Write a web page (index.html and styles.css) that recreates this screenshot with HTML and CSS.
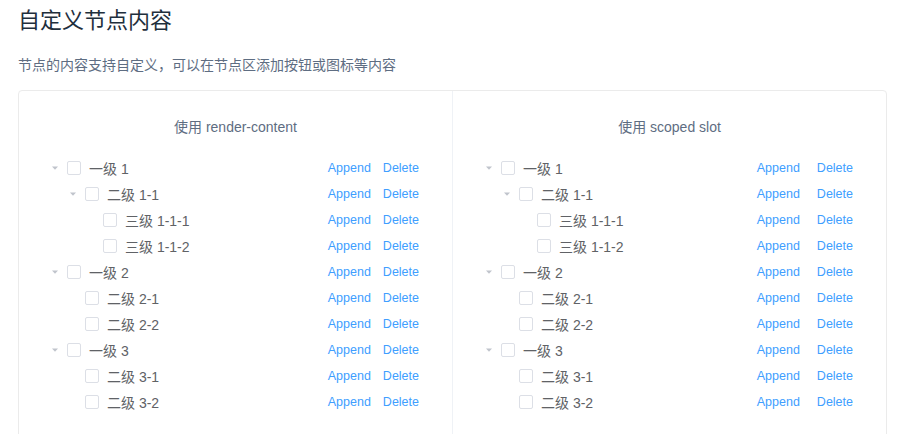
FILE: index.html
```html
<!DOCTYPE html>
<html lang="zh">
<head>
<meta charset="utf-8">
<link rel="stylesheet" href="styles.css">
</head>
<body>
<div class="page">
  <h3 class="title">自定义节点内容</h3>
  <p class="desc">节点的内容支持自定义，可以在节点区添加按钮或图标等内容</p>
  <div class="demo">
    <div class="block">
      <p class="demonstration">使用 render-content</p>
      <div class="tree">
        <div class="node l1"><span class="caret"><svg width="12" height="12" viewBox="0 0 12 12"><polygon points="3,4.5 9,4.5 6,7.8" fill="#c0c4cc"/></svg></span><span class="cb"></span><span class="label">一级 1</span><span class="ops"><span class="btn">Append</span><span class="btn">Delete</span></span></div>
        <div class="node l2"><span class="caret"><svg width="12" height="12" viewBox="0 0 12 12"><polygon points="3,4.5 9,4.5 6,7.8" fill="#c0c4cc"/></svg></span><span class="cb"></span><span class="label">二级 1-1</span><span class="ops"><span class="btn">Append</span><span class="btn">Delete</span></span></div>
        <div class="node l3"><span class="caret leaf"></span><span class="cb"></span><span class="label">三级 1-1-1</span><span class="ops"><span class="btn">Append</span><span class="btn">Delete</span></span></div>
        <div class="node l3"><span class="caret leaf"></span><span class="cb"></span><span class="label">三级 1-1-2</span><span class="ops"><span class="btn">Append</span><span class="btn">Delete</span></span></div>
        <div class="node l1"><span class="caret"><svg width="12" height="12" viewBox="0 0 12 12"><polygon points="3,4.5 9,4.5 6,7.8" fill="#c0c4cc"/></svg></span><span class="cb"></span><span class="label">一级 2</span><span class="ops"><span class="btn">Append</span><span class="btn">Delete</span></span></div>
        <div class="node l2"><span class="caret leaf"></span><span class="cb"></span><span class="label">二级 2-1</span><span class="ops"><span class="btn">Append</span><span class="btn">Delete</span></span></div>
        <div class="node l2"><span class="caret leaf"></span><span class="cb"></span><span class="label">二级 2-2</span><span class="ops"><span class="btn">Append</span><span class="btn">Delete</span></span></div>
        <div class="node l1"><span class="caret"><svg width="12" height="12" viewBox="0 0 12 12"><polygon points="3,4.5 9,4.5 6,7.8" fill="#c0c4cc"/></svg></span><span class="cb"></span><span class="label">一级 3</span><span class="ops"><span class="btn">Append</span><span class="btn">Delete</span></span></div>
        <div class="node l2"><span class="caret leaf"></span><span class="cb"></span><span class="label">二级 3-1</span><span class="ops"><span class="btn">Append</span><span class="btn">Delete</span></span></div>
        <div class="node l2"><span class="caret leaf"></span><span class="cb"></span><span class="label">二级 3-2</span><span class="ops"><span class="btn">Append</span><span class="btn">Delete</span></span></div>
      </div>
    </div>
    <div class="block last">
      <p class="demonstration">使用 scoped slot</p>
      <div class="tree slot">
        <div class="node l1"><span class="caret"><svg width="12" height="12" viewBox="0 0 12 12"><polygon points="3,4.5 9,4.5 6,7.8" fill="#c0c4cc"/></svg></span><span class="cb"></span><span class="label">一级 1</span><span class="ops"><span class="btn">Append</span><span class="btn">Delete</span></span></div>
        <div class="node l2"><span class="caret"><svg width="12" height="12" viewBox="0 0 12 12"><polygon points="3,4.5 9,4.5 6,7.8" fill="#c0c4cc"/></svg></span><span class="cb"></span><span class="label">二级 1-1</span><span class="ops"><span class="btn">Append</span><span class="btn">Delete</span></span></div>
        <div class="node l3"><span class="caret leaf"></span><span class="cb"></span><span class="label">三级 1-1-1</span><span class="ops"><span class="btn">Append</span><span class="btn">Delete</span></span></div>
        <div class="node l3"><span class="caret leaf"></span><span class="cb"></span><span class="label">三级 1-1-2</span><span class="ops"><span class="btn">Append</span><span class="btn">Delete</span></span></div>
        <div class="node l1"><span class="caret"><svg width="12" height="12" viewBox="0 0 12 12"><polygon points="3,4.5 9,4.5 6,7.8" fill="#c0c4cc"/></svg></span><span class="cb"></span><span class="label">一级 2</span><span class="ops"><span class="btn">Append</span><span class="btn">Delete</span></span></div>
        <div class="node l2"><span class="caret leaf"></span><span class="cb"></span><span class="label">二级 2-1</span><span class="ops"><span class="btn">Append</span><span class="btn">Delete</span></span></div>
        <div class="node l2"><span class="caret leaf"></span><span class="cb"></span><span class="label">二级 2-2</span><span class="ops"><span class="btn">Append</span><span class="btn">Delete</span></span></div>
        <div class="node l1"><span class="caret"><svg width="12" height="12" viewBox="0 0 12 12"><polygon points="3,4.5 9,4.5 6,7.8" fill="#c0c4cc"/></svg></span><span class="cb"></span><span class="label">一级 3</span><span class="ops"><span class="btn">Append</span><span class="btn">Delete</span></span></div>
        <div class="node l2"><span class="caret leaf"></span><span class="cb"></span><span class="label">二级 3-1</span><span class="ops"><span class="btn">Append</span><span class="btn">Delete</span></span></div>
        <div class="node l2"><span class="caret leaf"></span><span class="cb"></span><span class="label">二级 3-2</span><span class="ops"><span class="btn">Append</span><span class="btn">Delete</span></span></div>
      </div>
    </div>
  </div>
</div>
</body>
</html>
```

FILE: styles.css
```css
* { box-sizing: border-box; }
html, body { margin: 0; padding: 0; background: #fff; }
body {
  font-family: "Helvetica Neue", Helvetica, "Liberation Sans", "Noto Sans CJK SC", sans-serif;
  overflow: hidden;
}
.page {
  padding: 4px 12px 0 18px;
}
.title {
  margin: 0;
  font-size: 22px;
  line-height: 33px;
  font-weight: 400;
  color: #1f2f3d;
}
.desc {
  margin: 17px 0 0;
  font-size: 14px;
  line-height: 22px;
  color: #5e6d82;
}
.demo {
  margin-top: 14px;
  border: 1px solid #ebebeb;
  border-radius: 4px;
  display: flex;
}
.block {
  flex: 1;
  padding: 8px 24px 24px;
  border-right: 1px solid #eff2f6;
}
.block.last { border-right: none; }
.demonstration {
  margin: 0;
  text-align: center;
  font-size: 14px;
  line-height: 56px;
  color: #5e6d82;
}
.tree {
  display: flex;
  flex-direction: column;
  color: #606266;
}
.node {
  height: 26px;
  display: flex;
  align-items: center;
  font-size: 14px;
  padding-right: 9px;
}
.node.l2 { padding-left: 18px; }
.node.l3 { padding-left: 36px; }
.caret {
  width: 24px;
  height: 24px;
  padding: 6px;
  display: flex;
  align-items: center;
  justify-content: center;
  flex: none;
}
.caret svg { display: block; }
.cb {
  width: 14px;
  height: 14px;
  border: 1px solid #dcdfe6;
  border-radius: 2px;
  background: #fff;
  margin-right: 8px;
  flex: none;
}
.label { flex: 1; }
.ops { display: flex; gap: 12px; }
.slot .ops { gap: 17px; }
.btn {
  color: #409eff;
  font-size: 12.5px;
}
```
